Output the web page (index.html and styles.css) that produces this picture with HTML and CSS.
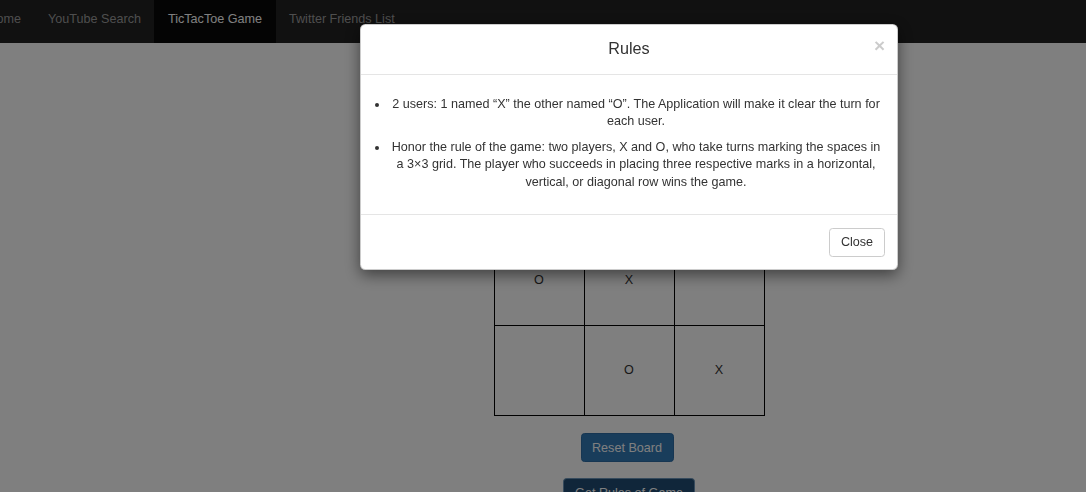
FILE: index.html
```html
<!DOCTYPE html>
<html lang="en">
<head>
<meta charset="utf-8">
<title>TicTacToe Game</title>
<link rel="stylesheet" href="styles.css">
</head>
<body>
<div class="page">
  <nav class="navbar">
    <ul class="nav">
      <li><a href="#">Home</a></li>
      <li><a href="#">YouTube Search</a></li>
      <li class="active"><a href="#">TicTacToe Game</a></li>
      <li><a href="#">Twitter Friends List</a></li>
    </ul>
  </nav>
  <main class="game">
    <div class="board">
      <div class="cell"></div>
      <div class="cell"></div>
      <div class="cell"></div>
      <div class="cell">O</div>
      <div class="cell">X</div>
      <div class="cell"></div>
      <div class="cell"></div>
      <div class="cell">O</div>
      <div class="cell">X</div>
    </div>
    <button class="btn btn-primary reset">Reset Board</button>
    <button class="btn btn-primary rules-btn">Get Rules of Game</button>
  </main>
</div>
<div class="backdrop"></div>
<div class="modal">
  <div class="modal-header">
    <button class="close" aria-label="Close">&times;</button>
    <h4 class="modal-title">Rules</h4>
  </div>
  <div class="modal-body">
    <ul class="rules">
      <li> 2 users: 1 named “X” the other named “O”. The Application will make it clear the turn for each user.</li>
      <li> Honor the rule of the game: two players, X and O, who take turns marking the spaces in a 3×3 grid. The player who succeeds in placing three respective marks in a horizontal, vertical, or diagonal row wins the game.</li>
    </ul>
  </div>
  <div class="modal-footer">
    <button class="btn btn-default">Close</button>
  </div>
</div>
</body>
</html>
```
FILE: styles.css
```css
* { box-sizing: border-box; }
html, body { margin: 0; padding: 0; }
body {
  background: #fff;
  color: #333;
  font-family: "Liberation Sans", Arial, Helvetica, sans-serif;
  font-size: 12.6px;
  line-height: 18px;
  overflow: hidden;
  width: 1086px;
  height: 492px;
}
.page {
  width: 1258px;
}
.navbar {
  background: #222;
  height: 43px;
  overflow: hidden;
}
.nav {
  list-style: none;
  margin: 0 0 0 -26px;
  padding: 0;
  display: flex;
}
.nav a {
  display: block;
  padding: 10px 13.5px 15px;
  color: #9d9d9d;
  text-decoration: none;
  line-height: 18px;
  font-size: 12.6px;
}
.nav .active a {
  background: #080808;
  color: #fff;
}
.game {
  display: flex;
  flex-direction: column;
  align-items: center;
  padding-top: 102px;
}
.board {
  display: grid;
  grid-template-columns: repeat(3, 89px);
  grid-auto-rows: 89px;
  gap: 1px;
  padding: 1px;
  background: #000;
  width: 271px;
}
.cell {
  background: #fff;
  display: flex;
  align-items: center;
  justify-content: center;
  color: #333;
  padding-bottom: 2px;
}
.btn {
  font-family: inherit;
  font-size: 12.6px;
  line-height: 18px;
  padding: 5px 10.8px;
  border-radius: 3.6px;
  border: 1px solid transparent;
  cursor: pointer;
}
.btn-primary {
  background: #337ab7;
  border-color: #2e6da4;
  color: #fff;
}
.reset {
  margin-top: 17px;
  margin-right: 4px;
  height: 29px;
  width: 93px;
  padding: 0;
}
.rules-btn {
  margin-top: 16px;
  width: 132px;
  height: 29px;
  padding: 0;
  background: #204d74;
  border-color: #6d94b8;
}
.backdrop {
  position: fixed;
  inset: 0;
  background: rgba(0, 0, 0, 0.5);
  z-index: 10;
}
.modal {
  position: fixed;
  left: 360px;
  top: 24px;
  width: 538px;
  background: #fff;
  border: 1px solid rgba(0, 0, 0, 0.2);
  border-radius: 5.4px;
  box-shadow: 0 5px 15px rgba(0, 0, 0, 0.5);
  z-index: 20;
}
.modal-header {
  position: relative;
  height: 50px;
  border-bottom: 1px solid #e5e5e5;
  display: flex;
  align-items: center;
  justify-content: center;
}
.modal-title {
  margin: 0;
  font-size: 16.2px;
  font-weight: normal;
  line-height: 23px;
  color: #333;
  padding-bottom: 3px;
}
.close {
  position: absolute;
  right: 12px;
  top: 11px;
  background: none;
  border: 0;
  padding: 0;
  font-family: inherit;
  font-size: 19px;
  font-weight: bold;
  line-height: 19px;
  color: #000;
  opacity: 0.2;
  cursor: pointer;
}
.modal-body {
  padding: 13.5px 13.5px;
  text-align: center;
  line-height: 17.5px;
}
.rules {
  margin: 7px 0 9px;
  padding-left: 14px;
}
.rules li {
  margin-bottom: 8px;
}
.rules li:last-child {
  margin-bottom: 0;
}
.modal-footer {
  border-top: 1px solid #e5e5e5;
  padding: 13px 12px 12px;
  display: flex;
  justify-content: flex-end;
}
.btn-default {
  background: #fff;
  border-color: #ccc;
  color: #333;
  width: 56px;
  height: 29px;
  padding: 0;
}
```
